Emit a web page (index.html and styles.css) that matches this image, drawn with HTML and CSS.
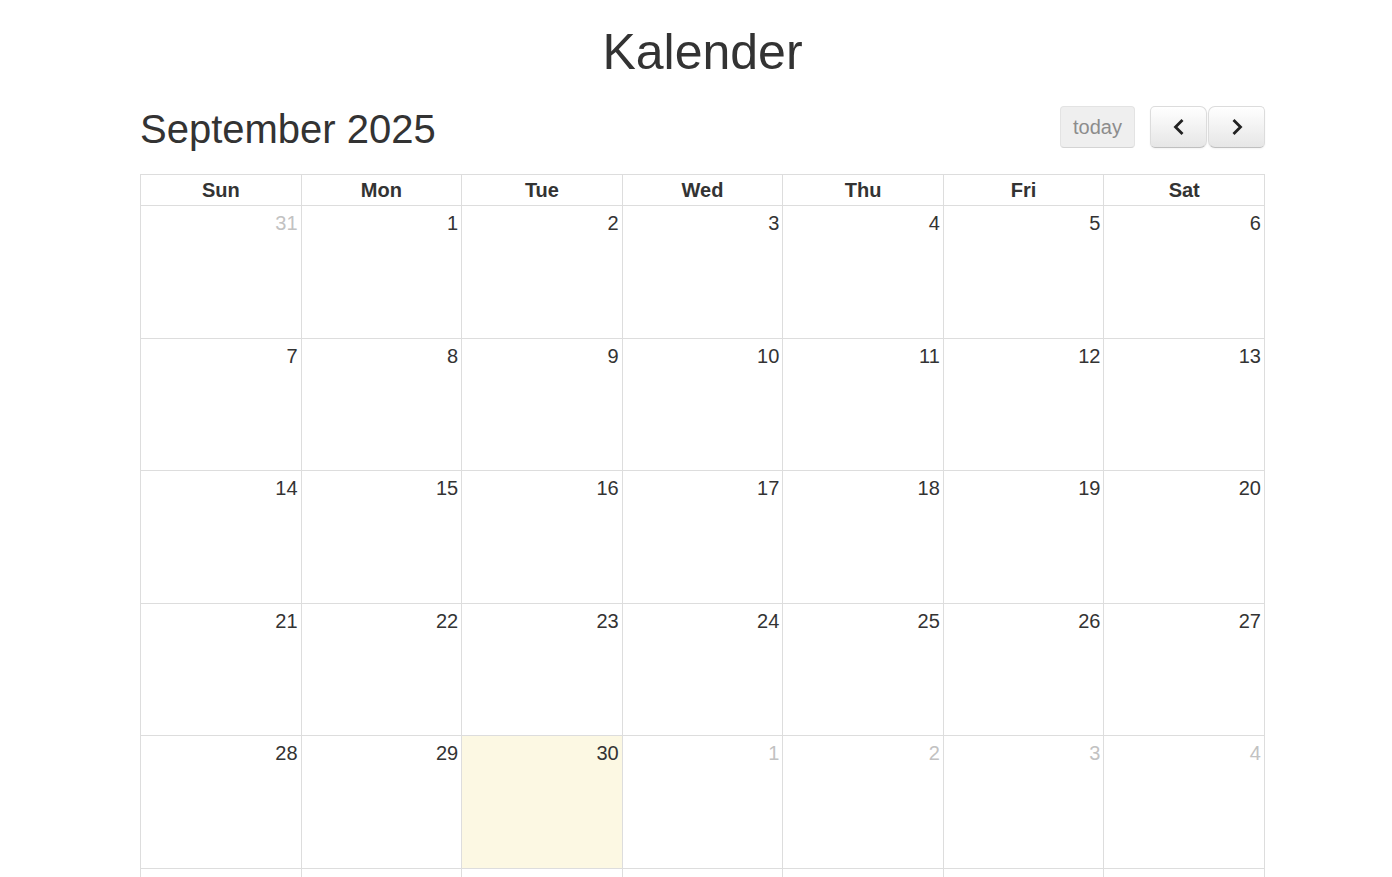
FILE: index.html
```html
<!DOCTYPE html>
<html lang="de">
<head>
    <meta charset="UTF-8">
    <meta name="viewport" content="width=device-width, initial-scale=1.0">
    <title>Kalender</title>
    <link rel="stylesheet" href="styles.css">
</head>
<body>
    <div class="page">
        <h1>Kalender</h1>

        <div class="toolbar">
            <h2>September 2025</h2>
            <div class="buttons">
                <button class="btn btn-today" disabled>today</button>
                <div class="btn-group">
                    <button class="btn btn-prev" aria-label="prev">
                        <svg width="14" height="18" viewBox="0 0 14 18"><path d="M10.5 2 L3.5 9 L10.5 16" fill="none" stroke="#222" stroke-width="2.8"/></svg>
                    </button>
                    <button class="btn btn-next" aria-label="next">
                        <svg width="14" height="18" viewBox="0 0 14 18"><path d="M3.5 2 L10.5 9 L3.5 16" fill="none" stroke="#222" stroke-width="2.8"/></svg>
                    </button>
                </div>
            </div>
        </div>

        <div class="month">
            <div class="head">Sun</div>
            <div class="head">Mon</div>
            <div class="head">Tue</div>
            <div class="head">Wed</div>
            <div class="head">Thu</div>
            <div class="head">Fri</div>
            <div class="head">Sat</div>

            <div class="day other">31</div>
            <div class="day">1</div>
            <div class="day">2</div>
            <div class="day">3</div>
            <div class="day">4</div>
            <div class="day">5</div>
            <div class="day">6</div>

            <div class="day">7</div>
            <div class="day">8</div>
            <div class="day">9</div>
            <div class="day">10</div>
            <div class="day">11</div>
            <div class="day">12</div>
            <div class="day">13</div>

            <div class="day">14</div>
            <div class="day">15</div>
            <div class="day">16</div>
            <div class="day">17</div>
            <div class="day">18</div>
            <div class="day">19</div>
            <div class="day">20</div>

            <div class="day">21</div>
            <div class="day">22</div>
            <div class="day">23</div>
            <div class="day">24</div>
            <div class="day">25</div>
            <div class="day">26</div>
            <div class="day">27</div>

            <div class="day">28</div>
            <div class="day">29</div>
            <div class="day today">30</div>
            <div class="day other">1</div>
            <div class="day other">2</div>
            <div class="day other">3</div>
            <div class="day other">4</div>

            <div class="day other">5</div>
            <div class="day other">6</div>
            <div class="day other">7</div>
            <div class="day other">8</div>
            <div class="day other">9</div>
            <div class="day other">10</div>
            <div class="day other">11</div>
        </div>
    </div>
</body>
</html>
```

FILE: styles.css
```css
body {
    margin: 0;
    padding: 0 0 40px 13px;
    font-family: "Liberation Sans", Arial, sans-serif;
    color: #333;
    background: #fff;
}
.page {
    width: 1125px;
    margin: 0 auto;
}
h1 {
    margin: 23px 0 0;
    font-size: 50px;
    font-weight: normal;
    text-align: center;
}
.toolbar {
    display: flex;
    align-items: center;
    justify-content: space-between;
    height: 42px;
    margin-top: 25px;
    margin-bottom: 26px;
}
.toolbar h2 {
    margin: 4px 0 0 0;
    font-size: 40px;
    font-weight: normal;
}
.buttons {
    display: flex;
    align-items: center;
    gap: 15px;
}
.btn-group {
    display: flex;
}
.btn {
    height: 42px;
    padding: 0 12px;
    font-family: inherit;
    font-size: 20px;
    color: #333;
    border: 1px solid;
    border-color: #e6e6e6 #e6e6e6 #bfbfbf;
    border-radius: 4px;
    background: linear-gradient(#fff, #e6e6e6);
    box-shadow: inset 0 1px 0 rgba(255, 255, 255, .2), 0 1px 2px rgba(0, 0, 0, .05);
    cursor: pointer;
}
.btn-today {
    width: 75px;
    background: #efefef;
    color: #8c8c8c;
    border-color: #e3e3e3 #e3e3e3 #d4d4d4;
    box-shadow: none;
    cursor: default;
}
.btn-prev,
.btn-next {
    width: 57px;
    display: flex;
    align-items: center;
    justify-content: center;
    border-color: #dcdcdc #dcdcdc #bfbfbf;
}
.btn-prev {
    border-radius: 5px 7px 7px 5px;
}
.btn-next {
    margin-left: 1px;
    border-radius: 7px 5px 5px 7px;
}
.month {
    display: grid;
    grid-template-columns: repeat(7, 1fr);
    grid-template-rows: 31px repeat(6, 132.6px);
    border-top: 1px solid #ddd;
    border-left: 1px solid #ddd;
}
.head {
    border-right: 1px solid #ddd;
    border-bottom: 1px solid #ddd;
    font-size: 20px;
    font-weight: bold;
    text-align: center;
    line-height: 30px;
}
.day {
    border-right: 1px solid #ddd;
    border-bottom: 1px solid #ddd;
    padding: 6px 3px 0 0;
    font-size: 20px;
    text-align: right;
}
.day.other {
    color: #c2c2c2;
}
.day.today {
    background: #fcf8e3;
}
```
